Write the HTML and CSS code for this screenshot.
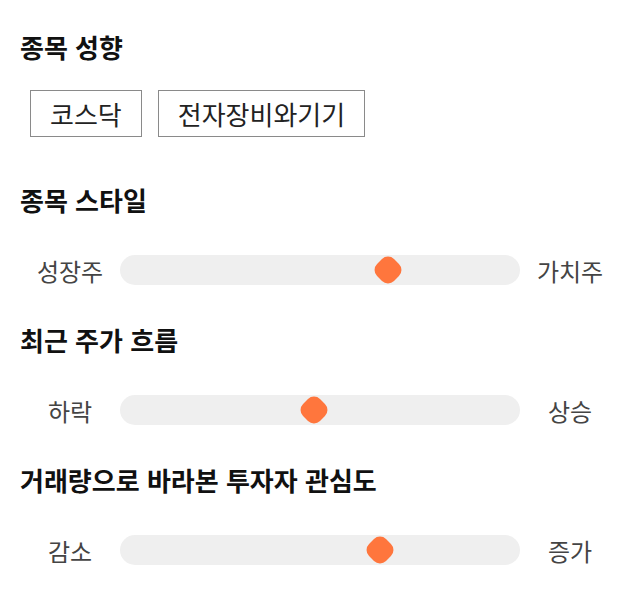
FILE: index.html
```html
<!DOCTYPE html>
<html lang="ko">
<head>
<meta charset="utf-8">
<link rel="stylesheet" href="styles.css">
</head>
<body>
<div class="page">
  <section class="section">
    <h2 class="title">종목 성향</h2>
    <div class="tags">
      <span class="tag">코스닥</span>
      <span class="tag">전자장비와기기</span>
    </div>
  </section>
  <section class="section">
    <h2 class="title">종목 스타일</h2>
    <div class="slider">
      <span class="label">성장주</span>
      <div class="track"><span class="thumb" style="left: 67%"></span></div>
      <span class="label">가치주</span>
    </div>
  </section>
  <section class="section">
    <h2 class="title">최근 주가 흐름</h2>
    <div class="slider">
      <span class="label">하락</span>
      <div class="track"><span class="thumb" style="left: 48.5%"></span></div>
      <span class="label">상승</span>
    </div>
  </section>
  <section class="section">
    <h2 class="title">거래량으로 바라본 투자자 관심도</h2>
    <div class="slider">
      <span class="label">감소</span>
      <div class="track"><span class="thumb" style="left: 65%"></span></div>
      <span class="label">증가</span>
    </div>
  </section>
</div>
</body>
</html>
```
FILE: styles.css
```css
html, body {
  margin: 0;
  padding: 0;
  background: #ffffff;
}
body {
  font-family: "Noto Sans CJK KR", "Noto Sans", sans-serif;
  color: #111;
}
.page {
  padding: 24px 20px 0 20px;
  width: 600px;
}
.title {
  margin: 0;
  font-size: 26px;
  font-weight: 700;
  line-height: 46px;
  color: #111;
}
.tags {
  display: flex;
  gap: 16px;
  padding: 20px 0 0 10px;
  height: 107px;
  box-sizing: border-box;
  align-items: flex-start;
}
.tag {
  border: 1px solid #8a8a8a;
  padding: 0 19px;
  height: 47px;
  box-sizing: border-box;
  display: flex;
  align-items: center;
  font-size: 26px;
  color: #222;
}
.slider {
  display: grid;
  grid-template-columns: 100px 400px 100px;
  align-items: center;
  height: 94px;
}
.label {
  text-align: center;
  font-size: 24px;
  color: #444;
}
.track {
  position: relative;
  height: 30px;
  background: #efefef;
  border-radius: 15px;
}
.thumb {
  position: absolute;
  top: 50%;
  width: 24px;
  height: 24px;
  margin-left: -12px;
  margin-top: -12px;
  background: #ff763d;
  border-radius: 8.5px;
  transform: rotate(45deg);
}
```
